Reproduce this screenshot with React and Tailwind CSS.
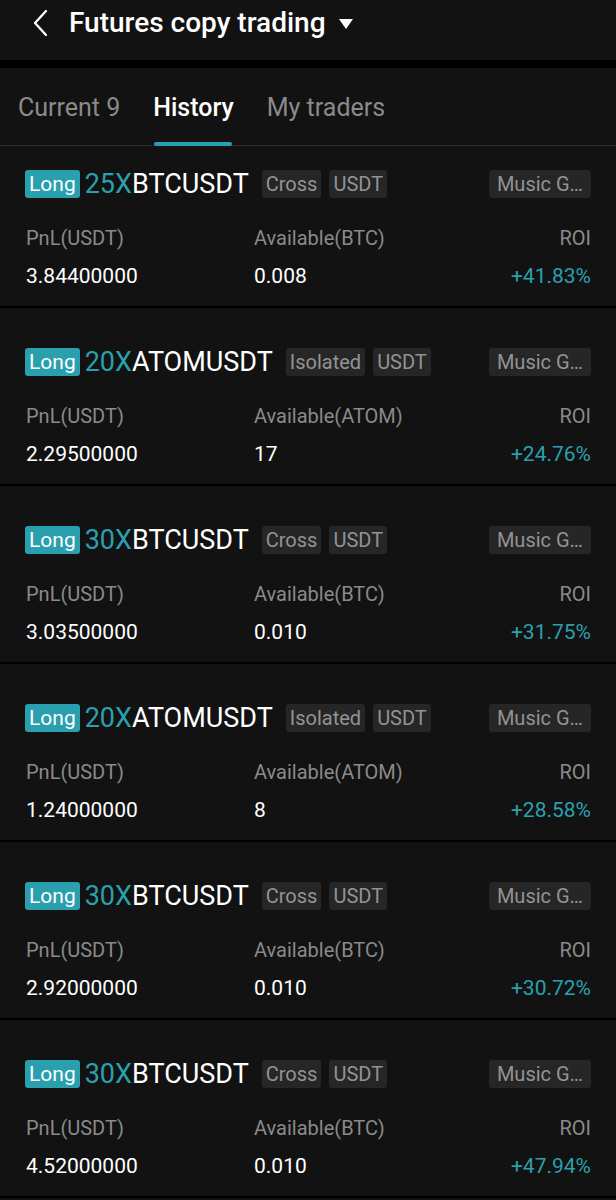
import React from "react";

const cards = [
  { lev: "25X", sym: "BTCUSDT", mode: "Cross", coin: "BTC", pnl: "3.84400000", avail: "0.008", roi: "+41.83%" },
  { lev: "20X", sym: "ATOMUSDT", mode: "Isolated", coin: "ATOM", pnl: "2.29500000", avail: "17", roi: "+24.76%" },
  { lev: "30X", sym: "BTCUSDT", mode: "Cross", coin: "BTC", pnl: "3.03500000", avail: "0.010", roi: "+31.75%" },
  { lev: "20X", sym: "ATOMUSDT", mode: "Isolated", coin: "ATOM", pnl: "1.24000000", avail: "8", roi: "+28.58%" },
  { lev: "30X", sym: "BTCUSDT", mode: "Cross", coin: "BTC", pnl: "2.92000000", avail: "0.010", roi: "+30.72%" },
  { lev: "30X", sym: "BTCUSDT", mode: "Cross", coin: "BTC", pnl: "4.52000000", avail: "0.010", roi: "+47.94%" },
];

function Tag({ children }) {
  return (
    <span className="h-[28px] px-[4px] rounded-[3px] bg-[#262626] text-[#939393] text-[20px] leading-[28px] flex items-center">
      {children}
    </span>
  );
}

function Card({ c, first }) {
  return (
    <div className={`${first ? "pt-[23px]" : "pt-[39px]"} pb-[18px] px-[25px] border-b-2 border-black`}>
      <div className="h-[30px] flex items-center">
        <span className="h-[28px] px-[4px] rounded-[3px] bg-[#2a9fae] text-white text-[21px] leading-[28px] flex items-center">
          Long
        </span>
        <span className="ml-[5px] text-[27px] leading-[30px] text-[#2aa0af]">{c.lev}</span>
        <span className="text-[27px] leading-[30px] text-white">{c.sym}</span>
        <div className="ml-[13px] flex items-center gap-[8px]">
          <Tag>{c.mode}</Tag>
          <Tag>USDT</Tag>
        </div>
        <div className="ml-auto">
          <Tag>
            <span className="px-[4px]">Music G…</span>
          </Tag>
        </div>
      </div>
      <div className="mt-[27px] grid grid-cols-[229px_1fr_auto] leading-[24px]">
        <div className="text-[20px] text-[#8a8a8a] pl-[1px]">PnL(USDT)</div>
        <div className="text-[20px] text-[#8a8a8a]">Available({c.coin})</div>
        <div className="text-[20px] text-[#8a8a8a] text-right">ROI</div>
        <div className="mt-[14px] text-[21px] text-white pl-[1px]">{c.pnl}</div>
        <div className="mt-[14px] text-[21px] text-white">{c.avail}</div>
        <div className="mt-[14px] text-[21px] text-[#2aa0af] text-right">{c.roi}</div>
      </div>
    </div>
  );
}

export default function App() {
  return (
    <div
      className="w-[616px] h-[1200px] overflow-hidden bg-[#121212]"
      style={{ fontFamily: "Roboto, 'Noto Sans', sans-serif" }}
    >
      <div className="h-[60px] flex items-center pb-[15px] pl-[32px]">
        <svg width="18" height="28" viewBox="0 0 18 28" fill="none">
          <path d="M14 2 L3 14 L14 26" stroke="white" strokeWidth="2.3" strokeLinecap="round" strokeLinejoin="round" />
        </svg>
        <span className="ml-[19px] text-white text-[28px] font-medium leading-none">Futures copy trading</span>
        <svg className="ml-[12px] mt-[2px]" width="16" height="12" viewBox="0 0 16 12">
          <path d="M1 1 H15 L8 11 Z" fill="white" />
        </svg>
      </div>
      <div className="h-[8px] bg-black" />
      <div className="h-[78px] flex items-end gap-[33px] pl-[18px] border-b border-[#2a2a2a]">
        <div className="h-full flex items-center pt-[2px] text-[25px] text-[#8a8a8a]">Current 9</div>
        <div className="relative h-full flex items-center pt-[2px] text-[25px] text-white font-medium">
          History
          <div className="absolute left-[1px] right-[2px] bottom-[-1px] h-[4px] rounded-[2px] bg-[#2aa0af]" />
        </div>
        <div className="h-full flex items-center pt-[2px] text-[25px] text-[#8a8a8a]">My traders</div>
      </div>
      {cards.map((c, i) => (
        <Card key={i} c={c} first={i === 0} />
      ))}
    </div>
  );
}
